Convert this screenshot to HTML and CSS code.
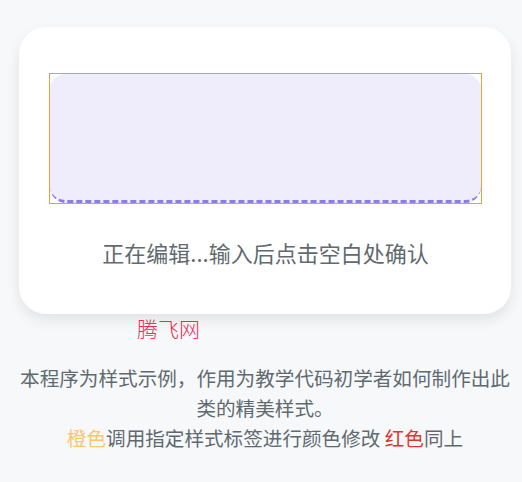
FILE: index.html
```html
<!DOCTYPE html>
<html lang="zh-CN">

<head>
    <meta charset="UTF-8">
    <meta name="viewport" content="width=device-width, initial-scale=1.0">
    <title>编辑框样式</title>
    <link rel="stylesheet" href="styles.css">
</head>

<body>
    <div class="card">
        <div class="edit-box">
            <div class="editor"></div>
        </div>
        <p class="hint">正在编辑...输入后点击空白处确认</p>
    </div>

    <span class="brand">腾飞网</span>

    <p class="desc">本程序为样式示例，作用为教学代码初学者如何制作出此类的精美样式。</p>
    <p class="desc"><span class="orange">橙色</span>调用指定样式标签进行颜色修改 <span class="red">红色</span>同上</p>
</body>

</html>
```

FILE: styles.css
```css
body {
    font-family: "Noto Sans CJK SC", "Noto Sans", sans-serif;
    background-color: #f7f8fa;
    margin: 0;
    color: #5f6a70;
}

.card {
    margin: 27px 11px 0 19px;
    padding: 46px 29px 47px 30px;
    background-color: #fff;
    border-radius: 27px;
    box-shadow: 0 6px 14px rgba(0, 0, 0, 0.09);
}

/* orange frame around the editing area */
.edit-box {
    height: 129px;
    border: 1px solid #e8a03a;
    background-color: #fff;
}

.editor {
    height: 100%;
    box-sizing: border-box;
    background-color: #efecfb;
    border-radius: 16px;
    border-bottom: 3px dashed #8a7bee;
}

.hint {
    margin: 33px 0 0;
    font-size: 22px;
    line-height: 30px;
    text-align: center;
    color: #606a6f;
}

.brand {
    display: block;
    margin: 1px 0 0 137px;
    font-size: 21px;
    line-height: 26px;
    font-weight: 300;
    color: #ee2d55;
}

.desc {
    margin: 0 11px 0 19px;
    font-size: 19.6px;
    line-height: 30px;
    text-align: center;
}

.desc:first-of-type {
    margin-top: 22px;
}

.orange {
    color: #fbc76c;
}

.red {
    color: #e03434;
}
```
